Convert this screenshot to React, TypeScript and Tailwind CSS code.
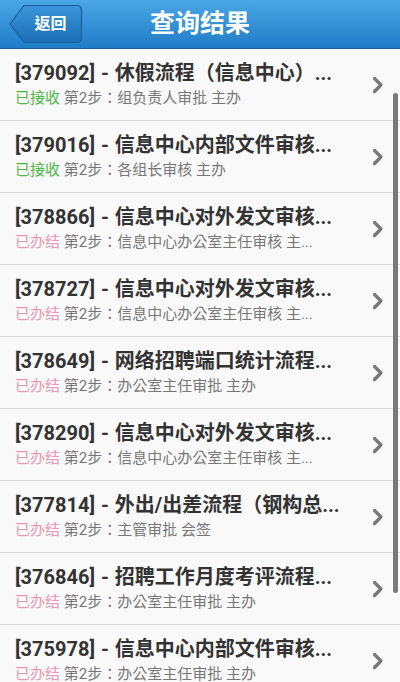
const rows = [
  { id: "379092", title: "休假流程（信息中心）...", status: "已接收", done: false, step: "第2步：组负责人审批 主办" },
  { id: "379016", title: "信息中心内部文件审核...", status: "已接收", done: false, step: "第2步：各组长审核 主办" },
  { id: "378866", title: "信息中心对外发文审核...", status: "已办结", done: true, step: "第2步：信息中心办公室主任审核 主..." },
  { id: "378727", title: "信息中心对外发文审核...", status: "已办结", done: true, step: "第2步：信息中心办公室主任审核 主..." },
  { id: "378649", title: "网络招聘端口统计流程...", status: "已办结", done: true, step: "第2步：办公室主任审批 主办" },
  { id: "378290", title: "信息中心对外发文审核...", status: "已办结", done: true, step: "第2步：信息中心办公室主任审核 主..." },
  { id: "377814", title: "外出/出差流程（钢构总...", status: "已办结", done: true, step: "第2步：主管审批 会签" },
  { id: "376846", title: "招聘工作月度考评流程...", status: "已办结", done: true, step: "第2步：办公室主任审批 主办" },
  { id: "375978", title: "信息中心内部文件审核...", status: "已办结", done: true, step: "第2步：办公室主任审批 主办" },
];

function Chevron() {
  return (
    <svg width="12" height="18" viewBox="0 0 12 18" className="shrink-0">
      <path d="M2.5 2.5 L9 9 L2.5 15.5" fill="none" stroke="#777" strokeWidth="3.2" strokeLinecap="round" strokeLinejoin="round" />
    </svg>
  );
}

function BackButton() {
  return (
    <div className="relative h-[40px] w-[75px]">
      <svg width="75" height="40" viewBox="0 0 75 40" className="absolute inset-0">
        <defs>
          <linearGradient id="bb" x1="0" y1="0" x2="0" y2="1">
            <stop offset="0" stopColor="#3b95d8" />
            <stop offset="1" stopColor="#1d6fb4" />
          </linearGradient>
        </defs>
        <path
          d="M16 1.5 H69 Q73.5 1.5 73.5 6 V34 Q73.5 38.5 69 38.5 H16 L2 20 Z"
          fill="url(#bb)"
          stroke="#15609e"
          strokeWidth="1.2"
          strokeLinejoin="round"
        />
      </svg>
      <span className="absolute inset-0 flex items-center justify-center pl-[10px] text-[16px] font-bold text-white">返回</span>
    </div>
  );
}

export default function App() {
  return (
    <div
      className="flex h-[682px] w-[400px] flex-col overflow-hidden bg-[#f9f9f9]"
      style={{ fontFamily: '"Roboto", "Noto Sans CJK TC", sans-serif' }}
    >
      <header className="relative flex h-[49px] shrink-0 items-center justify-center border-b border-[#1a5f96] bg-gradient-to-b from-[#4aa6e4] to-[#1f7cc6]">
        <div className="absolute left-[8px] top-[4px]">
          <BackButton />
        </div>
        <h1 className="text-[25px] font-bold text-white">查询结果</h1>
      </header>
      <div className="relative flex-1">
        <ul className="flex flex-col">
          {rows.map((r) => (
            <li key={r.id} className="flex h-[72px] shrink-0 items-center border-b border-[#d9d9d9] pl-[15px] pr-[16px]">
              <div className="flex min-w-0 flex-1 flex-col gap-[2px]">
                <div className="overflow-hidden whitespace-nowrap text-[20px] leading-[25px] font-bold text-[#333] [word-spacing:1px]">
                  [{r.id}] - {r.title}
                </div>
                <div className="overflow-hidden whitespace-nowrap text-[15px] leading-[20px] text-[#777]">
                  <span className={r.done ? "text-[#ea96b5]" : "text-[#4cb648]"}>{r.status}</span> {r.step}
                </div>
              </div>
              <Chevron />
            </li>
          ))}
        </ul>
        <div className="absolute right-[2px] top-[44px] h-[500px] w-[5px] rounded-full bg-[#7a7a7a]" />
      </div>
    </div>
  );
}
